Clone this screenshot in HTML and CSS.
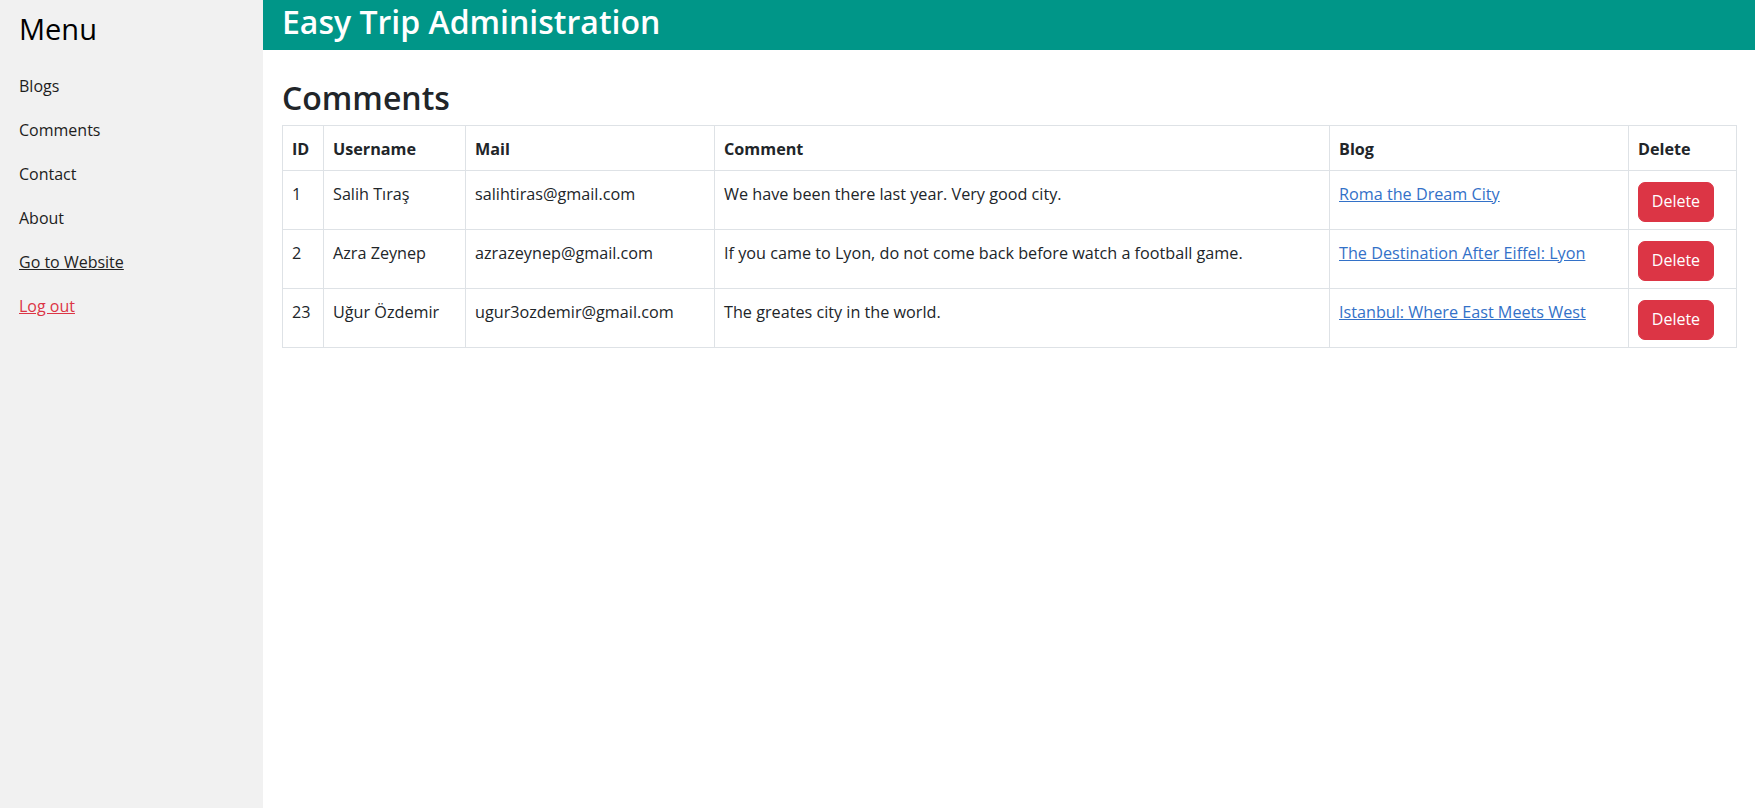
FILE: index.html
```html
<!DOCTYPE html>
<html lang="en">
<head>
<meta charset="utf-8">
<title>Easy Trip Administration - Comments</title>
<link rel="stylesheet" href="styles.css">
</head>
<body>
<div class="layout">
  <aside class="sidebar">
    <h3 class="menu-title">Menu</h3>
    <nav class="menu">
      <a class="menu-item" href="#">Blogs</a>
      <a class="menu-item" href="#">Comments</a>
      <a class="menu-item" href="#">Contact</a>
      <a class="menu-item" href="#">About</a>
      <a class="menu-item link-under" href="#">Go to Website</a>
      <a class="menu-item link-red" href="#">Log out</a>
    </nav>
  </aside>
  <main class="main">
    <header class="topbar">
      <h1 class="topbar-title">Easy Trip Administration</h1>
    </header>
    <section class="content">
      <h2 class="page-title">Comments</h2>
      <table class="table">
        <thead>
          <tr>
            <th class="c-id">ID</th>
            <th class="c-user">Username</th>
            <th class="c-mail">Mail</th>
            <th class="c-comment">Comment</th>
            <th class="c-blog">Blog</th>
            <th class="c-del">Delete</th>
          </tr>
        </thead>
        <tbody>
          <tr>
            <td>1</td>
            <td>Salih Tıraş</td>
            <td>salihtiras@gmail.com</td>
            <td>We have been there last year. Very good city.</td>
            <td><a class="blog-link" href="#">Roma the Dream City</a></td>
            <td><button class="btn-delete" type="button">Delete</button></td>
          </tr>
          <tr>
            <td>2</td>
            <td>Azra Zeynep</td>
            <td>azrazeynep@gmail.com</td>
            <td>If you came to Lyon, do not come back before watch a football game.</td>
            <td><a class="blog-link" href="#">The Destination After Eiffel: Lyon</a></td>
            <td><button class="btn-delete" type="button">Delete</button></td>
          </tr>
          <tr>
            <td>23</td>
            <td>Uğur Özdemir</td>
            <td>ugur3ozdemir@gmail.com</td>
            <td>The greates city in the world.</td>
            <td><a class="blog-link" href="#">Istanbul: Where East Meets West</a></td>
            <td><button class="btn-delete" type="button">Delete</button></td>
          </tr>
        </tbody>
      </table>
    </section>
  </main>
</div>
</body>
</html>
```
FILE: styles.css
```css
* { box-sizing: border-box; }

html, body {
  margin: 0;
  padding: 0;
  height: 100%;
}

body {
  font-family: "Open Sans", "Noto Sans", sans-serif;
  font-size: 16px;
  color: #212529;
  background: #ffffff;
}

.layout {
  display: flex;
  min-height: 808px;
}

.sidebar {
  width: 263px;
  flex: 0 0 263px;
  background: #f1f1f1;
  padding-left: 19px;
}

.menu-title {
  margin: 9px 0 15px;
  font-size: 29px;
  font-weight: 500;
  line-height: 40px;
  color: #000;
}

.menu {
  display: flex;
  flex-direction: column;
}

.menu-item {
  display: block;
  height: 44px;
  line-height: 44px;
  font-size: 16px;
  color: #1d1d1d;
  text-decoration: none;
}

.link-under {
  text-decoration: underline;
  color: #222;
}

.link-red {
  text-decoration: underline;
  color: #dc3545;
}

.main {
  flex: 1;
  min-width: 0;
}

.topbar {
  background: #009688;
  height: 50px;
  padding: 0 19px 6px;
}

.topbar-title {
  margin: 0;
  font-size: 32px;
  font-weight: 600;
  line-height: 44px;
  color: #ffffff;
}

.content {
  padding: 29px 19px 0;
}

.page-title {
  margin: 0 0 8px;
  font-size: 32px;
  font-weight: 600;
  line-height: 38.4px;
  color: #212529;
}

.table {
  width: 100%;
  border-collapse: collapse;
  table-layout: fixed;
  vertical-align: top;
}

.table th,
.table td {
  border: 1px solid #dee2e6;
  padding: 10.5px 9px 7.5px;
  line-height: 25px;
  text-align: left;
  vertical-align: top;
  font-size: 16.2px;
  color: #212529;
}

.table th {
  padding: 10.5px 9px 8.5px;
  font-weight: 700;
}

.c-id { width: 41px; }
.c-user { width: 142px; }
.c-mail { width: 249px; }
.c-comment { width: 615px; }
.c-blog { width: 299px; }
.c-del { width: 108px; }

.blog-link {
  color: #3371c8;
  text-decoration: underline;
}

.btn-delete {
  display: inline-block;
  font-family: inherit;
  font-size: 16px;
  line-height: 25px;
  padding: 6.5px 12.8px;
  border: 1px solid #dc3545;
  border-radius: 7px;
  background: #dc3545;
  color: #ffffff;
  cursor: pointer;
}
```
